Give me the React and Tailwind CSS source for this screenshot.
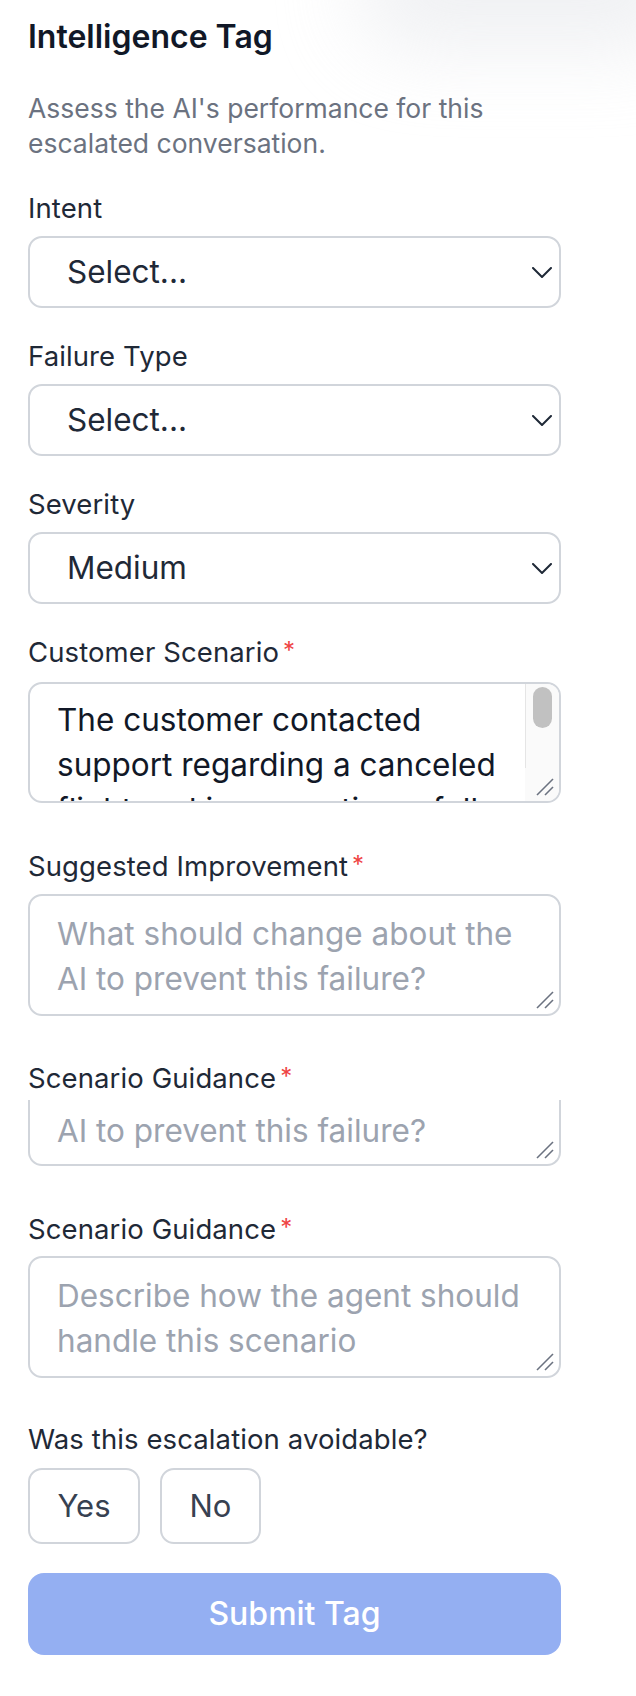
import React from "react";

const Chevron = () => (
  <svg width="20" height="11" viewBox="0 0 20 11" fill="none">
    <polyline points="1,1 10,10 19,1" stroke="#1f2937" strokeWidth="2" strokeLinecap="round" strokeLinejoin="round" />
  </svg>
);

const Grip = () => (
  <svg className="absolute right-[5px] bottom-[5px]" width="18" height="18" viewBox="0 0 18 18" fill="none">
    <line x1="17" y1="1" x2="1" y2="17" stroke="#6b7280" strokeWidth="1.6" />
    <line x1="17" y1="9" x2="9" y2="17" stroke="#6b7280" strokeWidth="1.6" />
  </svg>
);

const Label = ({ children, required, className = "" }) => (
  <div className={`h-[32px] leading-[32px] text-[27.5px] font-normal tracking-[0.1px] text-[#1f2937] ${className}`}>
    {children}
    {required && <span className="ml-[4px] align-top text-[24px] leading-[30px] text-[#ef4444]">*</span>}
  </div>
);

const SelectBox = ({ value }) => (
  <div className="mt-[12px] flex h-[72px] items-center justify-between rounded-[14px] border-2 border-[#d1d5db] bg-white pl-[37px] pr-[7px] text-[31.5px] text-[#1f2937]">
    <span>{value}</span>
    <Chevron />
  </div>
);

export default function App() {
  return (
    <div className="relative min-h-[1696px] w-[636px] overflow-hidden bg-white font-['Inter','Liberation_Sans',sans-serif]">
      <div className="pointer-events-none absolute right-[-60px] top-[-70px] h-[120px] w-[340px] rounded-full bg-[#e5e7eb] opacity-60 blur-2xl" />
      <div className="relative w-[561px] pl-[28px] pt-[17px]">
        <h2 className="h-[40px] text-[32px] font-semibold leading-[40px] text-[#111827]">Intelligence Tag</h2>
        <p className="mt-[34px] text-[26.5px] leading-[35px] text-[#6b7280]">
          Assess the AI's performance for this escalated conversation.
        </p>

        <Label className="mt-[31px]">Intent</Label>
        <SelectBox value="Select..." />

        <Label className="mt-[32px]">Failure Type</Label>
        <SelectBox value="Select..." />

        <Label className="mt-[32px]">Severity</Label>
        <SelectBox value="Medium" />

        <Label className="mt-[32px]" required>Customer Scenario</Label>
        <div className="relative mt-[14px] h-[121px] overflow-hidden rounded-[14px] border-2 border-[#d1d5db] bg-white pl-[27px] pr-[40px] pt-[13px] text-[31.5px] leading-[45px] text-[#111827]">
          <p>The customer contacted support regarding a canceled flight and is requesting a full refund for the ticket.</p>
          <div className="absolute right-0 top-0 h-[86px] w-[34px] border-l border-[#e5e5e5] bg-[#fafafa]">
            <div className="ml-[7px] mt-[3px] h-[41px] w-[19px] rounded-full bg-[#c1c1c1]" />
          </div>
          <div className="absolute bottom-0 right-0 h-[33px] w-[34px] bg-[#fafafa]" />
          <Grip />
        </div>

        <Label className="mt-[47px]" required>Suggested Improvement</Label>
        <div className="relative mt-[12px] h-[122px] rounded-[14px] border-2 border-[#d1d5db] bg-white pl-[27px] pr-[20px] pt-[15px] text-[31.5px] leading-[45px] text-[#9ca3af]">
          <p>What should change about the AI to prevent this failure?</p>
          <Grip />
        </div>

        <Label className="mt-[46px]" required>Scenario Guidance</Label>
        <div className="relative mt-[6px] h-[66px] overflow-hidden rounded-b-[14px] border-x-2 border-b-2 border-[#d1d5db] bg-white pl-[27px] pr-[20px] pt-[8px] text-[31.5px] leading-[45px] text-[#9ca3af]">
          <p>AI to prevent this failure?</p>
          <Grip />
        </div>

        <Label className="mt-[47px]" required>Scenario Guidance</Label>
        <div className="relative mt-[11px] h-[122px] rounded-[14px] border-2 border-[#d1d5db] bg-white pl-[27px] pr-[20px] pt-[15px] text-[31.5px] leading-[45px] text-[#9ca3af]">
          <p>Describe how the agent should handle this scenario</p>
          <Grip />
        </div>

        <Label className="mt-[45px]">Was this escalation avoidable?</Label>
        <div className="mt-[13px] flex gap-[20px]">
          <button className="flex h-[76px] w-[112px] items-center justify-center rounded-[14px] border-2 border-[#d1d5db] bg-white text-[31px] text-[#374151]">Yes</button>
          <button className="flex h-[76px] w-[101px] items-center justify-center rounded-[14px] border-2 border-[#d1d5db] bg-white text-[31px] text-[#374151]">No</button>
        </div>

        <button className="mt-[29px] flex h-[82px] w-full items-center justify-center rounded-[16px] bg-[#94aff2] text-[32px] font-medium text-white">
          Submit Tag
        </button>
      </div>
    </div>
  );
}
